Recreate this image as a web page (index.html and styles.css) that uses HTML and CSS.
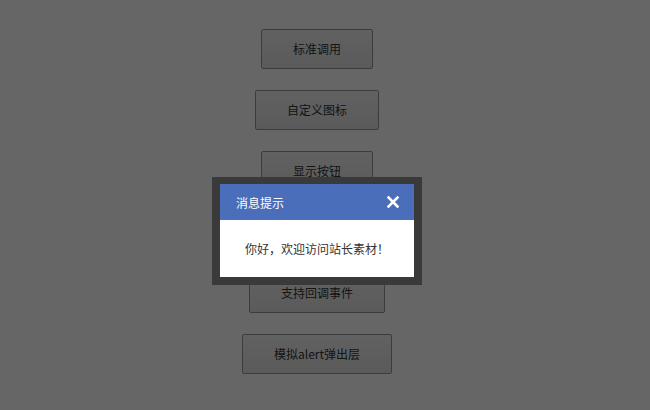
FILE: index.html
```html
<!DOCTYPE html>
<html lang="zh-CN">
<head>
<meta charset="utf-8">
<title>弹出层</title>
<link rel="stylesheet" href="styles.css">
</head>
<body>
<div class="page">
  <button class="btn">标准调用</button>
  <button class="btn">自定义图标</button>
  <button class="btn">显示按钮</button>
  <button class="btn">定时关闭</button>
  <button class="btn">支持回调事件</button>
  <button class="btn">模拟alert弹出层</button>
</div>
<div class="overlay"></div>
<div class="dialog">
  <div class="dialog-inner">
    <div class="dialog-head">
      <span class="dialog-title">消息提示</span>
      <span class="dialog-close">
        <svg width="12" height="12" viewBox="0 0 12 12"><path d="M1.5 1.5 L10.5 10.5 M10.5 1.5 L1.5 10.5" stroke="#fff" stroke-width="2.6" stroke-linecap="square"/></svg>
      </span>
    </div>
    <div class="dialog-body">你好，欢迎访问站长素材！</div>
  </div>
</div>
</body>
</html>
```

FILE: styles.css
```css
html, body {
  margin: 0;
  padding: 0;
  background: #fff;
  font-family: "Noto Sans CJK SC", "Liberation Sans", sans-serif;
  overflow: hidden;
}
.page {
  width: 634px;
  padding-top: 29px;
  display: flex;
  flex-direction: column;
  align-items: center;
  gap: 21px;
}
.btn {
  height: 40px;
  padding: 0 31px;
  border: 1px solid #979797;
  border-radius: 2px;
  background: linear-gradient(#f3f3f3, #e2e2e2);
  color: #333;
  font-family: "Noto Sans CJK SC", "Liberation Sans", sans-serif;
  font-size: 12px;
  line-height: 38px;
  white-space: nowrap;
}
.overlay {
  position: fixed;
  inset: 0;
  background: rgba(0, 0, 0, 0.6);
}
.dialog {
  position: absolute;
  left: 212px;
  top: 177px;
  border: 8px solid #3a3a3a;
  border-top-width: 7px;
}
.dialog-inner {
  width: 194px;
  background: #fff;
}
.dialog-head {
  height: 36px;
  background: #4a6eb9;
  display: flex;
  align-items: center;
  justify-content: space-between;
  padding: 0 16px;
}
.dialog-title {
  color: #fff;
  font-size: 12px;
}
.dialog-close {
  display: flex;
  margin-right: -1px;
}
.dialog-body {
  height: 57px;
  display: flex;
  align-items: center;
  justify-content: center;
  font-size: 12px;
  color: #333;
}
```
